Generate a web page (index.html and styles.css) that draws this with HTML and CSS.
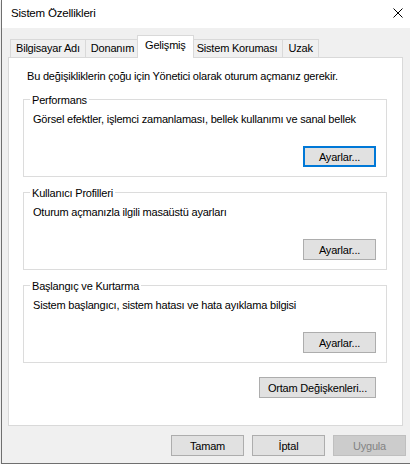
FILE: index.html
```html
<!DOCTYPE html>
<html lang="tr">
<head>
  <meta charset="UTF-8">
  <title>Sistem Özellikleri</title>
  <link rel="stylesheet" href="styles.css">
</head>
<body>

  <div class="window">
    <div class="titlebar">
      <span class="title">Sistem Özellikleri</span>
      <span class="close">
        <svg width="10" height="10" viewBox="0 0 10 10"><path d="M0.5 0.5L9.5 9.5M9.5 0.5L0.5 9.5" stroke="#000" stroke-width="1"/></svg>
      </span>
    </div>

    <div class="client">
      <div class="tabs">
        <div class="tab">Bilgisayar Adı</div>
        <div class="tab">Donanım</div>
        <div class="tab active">Gelişmiş</div>
        <div class="tab">Sistem Koruması</div>
        <div class="tab">Uzak</div>
      </div>

      <div class="panel">
        <p class="intro">Bu değişikliklerin çoğu için Yönetici olarak oturum açmanız gerekir.</p>

        <div class="group">
          <span class="legend">Performans</span>
          <p class="desc">Görsel efektler, işlemci zamanlaması, bellek kullanımı ve sanal bellek</p>
          <div class="btn-row"><button class="btn focused">Ayarlar...</button></div>
        </div>

        <div class="group">
          <span class="legend">Kullanıcı Profilleri</span>
          <p class="desc">Oturum açmanızla ilgili masaüstü ayarları</p>
          <div class="btn-row"><button class="btn">Ayarlar...</button></div>
        </div>

        <div class="group">
          <span class="legend">Başlangıç ve Kurtarma</span>
          <p class="desc">Sistem başlangıcı, sistem hatası ve hata ayıklama bilgisi</p>
          <div class="btn-row"><button class="btn">Ayarlar...</button></div>
        </div>

        <div class="env-row"><button class="btn wide">Ortam Değişkenleri...</button></div>
      </div>

      <div class="footer">
        <button class="btn">Tamam</button>
        <button class="btn">İptal</button>
        <button class="btn" disabled>Uygula</button>
      </div>
    </div>
  </div>

</body>
</html>
```

FILE: styles.css
```css
body {
  margin: 0;
  background: #fff;
  font-family: "Liberation Sans", Arial, sans-serif;
  font-size: 11px;
  letter-spacing: -0.2px;
  color: #000;
  overflow: hidden;
}

.window {
  width: 419px;
  height: 463px;
  margin-left: 1px;
  border-left: 1px solid #6f6f6f;
  border-bottom: 1px solid #6f6f6f;
  background: #f0f0f0;
  box-shadow: 0 1px 3px rgba(0, 0, 0, 0.18);
}

.titlebar {
  display: flex;
  height: 28px;
  padding-left: 9px;
  background: #fff;
}

.title {
  padding-top: 5px;
  font-size: 11.5px;
  line-height: 16px;
}

.close {
  display: flex;
  align-items: center;
  justify-content: center;
  width: 46px;
  margin-left: auto;
  padding-bottom: 2px;
}

.client {
  padding: 7px 0 7px 6px;
}

/* tabs */
.tabs {
  display: flex;
  align-items: flex-end;
  height: 22px;
  padding-left: 2px;
}

.tab {
  box-sizing: border-box;
  height: 18px;
  padding: 0 5px;
  line-height: 16px;
  border: 1px solid #d9d9d9;
  border-bottom: none;
  background: #f0f0f0;
  white-space: nowrap;
}

.tab + .tab {
  margin-left: -1px;
}

.tab.active {
  position: relative;
  z-index: 1;
  height: 23px;
  margin: 0 -2px -1px -3px;
  padding: 1px 7px 0;
  background: #fff;
}

/* panel */
.panel {
  box-sizing: border-box;
  width: 395px;
  height: 369px;
  padding: 10px 15px 0 14px;
  border: 1px solid #d9d9d9;
  background: #fff;
}

.intro {
  margin: 0 0 0 4px;
  line-height: 16px;
}

.group {
  display: flex;
  flex-direction: column;
  margin-top: 15px;
  padding: 0 10px 9px 9px;
  border: 1px solid #dcdcdc;
}

.legend {
  align-self: flex-start;
  margin: -8px 0 0 -3px;
  padding: 0 2px;
  line-height: 16px;
  background: #fff;
}

.desc {
  margin: 3px 0 0;
  line-height: 16px;
}

.btn-row {
  display: flex;
  justify-content: flex-end;
  margin-top: 19px;
}

.env-row {
  display: flex;
  justify-content: flex-end;
  margin-top: 14px;
  padding-right: 11px;
}

/* buttons */
.btn {
  box-sizing: border-box;
  width: 73px;
  height: 21px;
  padding: 0;
  border: 1px solid #adadad;
  background: #e1e1e1;
  color: #000;
  font: inherit;
  letter-spacing: inherit;
}

.btn.wide {
  width: 117px;
}

.btn.focused {
  border: 2px solid #0078d7;
}

.btn:disabled {
  border-color: #bfbfbf;
  background: #cccccc;
  color: #838383;
}

.footer {
  display: flex;
  justify-content: flex-end;
  gap: 8px;
  width: 398px;
  margin-top: 9px;
}
```
